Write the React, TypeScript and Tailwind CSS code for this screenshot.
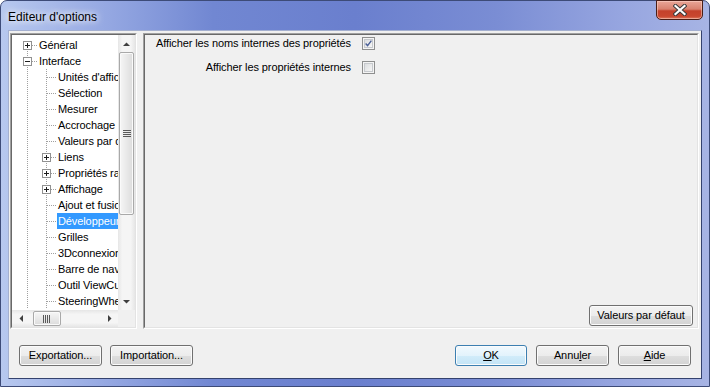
import React from "react";

type Row = { label: string; level: 0 | 1; exp?: "+" | "-"; sel?: boolean };

const rows: Row[] = [
  { label: "Général", level: 0, exp: "+" },
  { label: "Interface", level: 0, exp: "-" },
  { label: "Unités d'affichage", level: 1 },
  { label: "Sélection", level: 1 },
  { label: "Mesurer", level: 1 },
  { label: "Accrochage", level: 1 },
  { label: "Valeurs par défaut", level: 1 },
  { label: "Liens", level: 1, exp: "+" },
  { label: "Propriétés rapides", level: 1, exp: "+" },
  { label: "Affichage", level: 1, exp: "+" },
  { label: "Ajout et fusion", level: 1 },
  { label: "Développeur", level: 1, sel: true },
  { label: "Grilles", level: 1 },
  { label: "3Dconnexion", level: 1 },
  { label: "Barre de navigation", level: 1 },
  { label: "Outil ViewCube", level: 1 },
  { label: "SteeringWheels", level: 1 },
];

// one indent column of the tree: dotted lines + optional expander box
function TreeCell({
  up = true,
  horiz = false,
  box,
}: {
  up?: boolean;
  horiz?: boolean;
  box?: "+" | "-";
}) {
  const dot = { stroke: "#a0a0a0", strokeDasharray: "1 1" };
  return (
    <svg width="19" height="16" className="shrink-0" shapeRendering="crispEdges">
      <line x1="9.5" y1={up ? 0 : 8} x2="9.5" y2="16" {...dot} />
      {horiz && <line x1="10" y1="8.5" x2="19" y2="8.5" {...dot} />}
      {box && (
        <>
          <rect x="5.5" y="4.5" width="8" height="8" fill="#fff" stroke="#919191" />
          <line x1="7" y1="8.5" x2="12" y2="8.5" stroke="#1e1e1e" />
          {box === "+" && <line x1="9.5" y1="6" x2="9.5" y2="11" stroke="#1e1e1e" />}
        </>
      )}
    </svg>
  );
}

function Arrow({ dir }: { dir: "up" | "down" | "left" | "right" }) {
  const pts = {
    up: "0,4 7,4 3.5,0.5",
    down: "0,0 7,0 3.5,3.5",
    left: "4,0 4,7 0.5,3.5",
    right: "0,0 0,7 3.5,3.5",
  }[dir];
  const v = dir === "up" || dir === "down";
  return (
    <svg width={v ? 7 : 4} height={v ? 4 : 7}>
      <polygon points={pts} fill="#404040" />
    </svg>
  );
}

function Grip({ vertical }: { vertical: boolean }) {
  return (
    <svg width="8" height="8" shapeRendering="crispEdges">
      {[0, 2, 4, 6].map((o) =>
        vertical ? (
          <line key={o} x1="0" y1={o + 0.5} x2="8" y2={o + 0.5} stroke="#5a5a5a" />
        ) : (
          <line key={o} x1={o + 0.5} y1="0" x2={o + 0.5} y2="8" stroke="#5a5a5a" />
        )
      )}
    </svg>
  );
}

function Button({
  label,
  w,
  focus,
}: {
  label: React.ReactNode;
  w: string;
  focus?: boolean;
}) {
  return (
    <div
      className={`${w} h-[21px] flex items-center justify-center rounded-[3px] border text-black shadow-[inset_0_0_0_1px_#fbfbfb] ${
        focus
          ? "border-[#3c7fb1] bg-[linear-gradient(#f1f9fe_0%,#e3f3fc_50%,#d2ecfa_51%,#c3e4f6_100%)]"
          : "border-[#707070] bg-[linear-gradient(#f3f3f3_0%,#ececec_50%,#dedede_51%,#d3d3d3_100%)]"
      }`}
    >
      {label}
    </div>
  );
}

function Checkbox({ checked }: { checked?: boolean }) {
  return (
    <div className="w-[13px] h-[13px] shrink-0 border border-[#8e8f8f] bg-[#f4f4f4] p-[1px]">
      <div className="w-full h-full border border-[#c6c9cd] bg-[linear-gradient(135deg,#dcdee0,#f6f6f6)] flex items-center justify-center">
        {checked && (
          <svg width="9" height="9" viewBox="0 0 9 9">
            <path d="M0.8 4.6 L3.3 7.2 L8.2 0.8" fill="none" stroke="#4a5f97" strokeWidth="1.8" />
          </svg>
        )}
      </div>
    </div>
  );
}

export default function App() {
  return (
    <div className="w-[710px] h-[387px] [font-family:'Liberation_Sans',Arial,sans-serif] text-[11px] tracking-[-0.1px] text-black">
      <div className="w-full h-full flex flex-col rounded-t-[7px] border border-[#3d4b78] bg-[linear-gradient(to_right,#b7c8ef_0%,#95a8e2_15%,#7187d2_30%,#6a7fce_50%,#7a8dd4_70%,#97a6e0_88%,#a7b4e4_100%)]">
        {/* Title bar */}
        <div className="h-[29px] flex items-start shrink-0">
          <div className="pl-[7px] pt-[7px] text-[12px] tracking-normal [text-shadow:0_0_6px_#fff,0_0_10px_#fff]">
            Editeur d'options
          </div>
          <div className="ml-auto mr-[6px] w-[47px] h-[20px] -mt-[1px] rounded-b-[5px] border border-[#4a1e16] bg-[linear-gradient(#e9a698_0%,#d8826f_45%,#c4412b_55%,#c9472f_85%,#dd7a5e_100%)] shadow-[inset_0_0_0_1px_rgba(255,220,210,0.5)] flex items-center justify-center">
            <svg width="14" height="12" viewBox="0 0 14 12">
              <path d="M2.5 2 L11.5 10 M11.5 2 L2.5 10" stroke="#3b3b3b" strokeWidth="4.2" strokeLinecap="square" />
              <path d="M2.5 2 L11.5 10 M11.5 2 L2.5 10" stroke="#fff" strokeWidth="2.2" strokeLinecap="square" />
            </svg>
          </div>
        </div>

        {/* Client area */}
        <div className="flex-1 mx-[7px] mb-[7px] flex flex-col bg-[#f0f0f0] border border-t-[#a4b0d0] border-l-[#a4b0d0] border-r-[#34426e] border-b-[#34426e] pl-[1px] pr-[2px] pt-[2px] pb-[12px]">
          <div className="flex h-[296px] gap-[6px]">
            {/* Tree panel */}
            <div className="w-[127px] h-full border border-t-[#a0a0a0] border-l-[#a0a0a0] border-r-white border-b-white">
              <div className="w-full h-full border border-t-[#696969] border-l-[#696969] border-r-[#e3e3e3] border-b-[#e3e3e3] flex flex-col bg-white">
                <div className="flex flex-1 min-h-0">
                  <div className="flex-1 min-w-0 overflow-hidden pt-[2px]">
                    {rows.map((r, i) => (
                      <div key={r.label} className="flex h-[16px] items-center pl-[6px] whitespace-nowrap">
                        {r.level === 0 ? (
                          <TreeCell up={i > 0} horiz box={r.exp} />
                        ) : (
                          <>
                            <TreeCell />
                            <TreeCell horiz box={r.exp} />
                          </>
                        )}
                        <span
                          className={`ml-[1px] px-[1px] h-[16px] leading-[16px] ${
                            r.sel ? "bg-[#3399ff] text-white" : ""
                          }`}
                        >
                          {r.label}
                        </span>
                      </div>
                    ))}
                  </div>
                  {/* vertical scrollbar */}
                  <div className="w-[17px] flex flex-col bg-[linear-gradient(to_right,#e6e6e6,#f5f5f5_25%,#f5f5f5_75%,#e6e6e6)]">
                    <div className="h-[17px] flex items-center justify-center">
                      <Arrow dir="up" />
                    </div>
                    <div className="h-[163px] mx-[1px] rounded-[2px] border border-[#a9a9a9] bg-[linear-gradient(to_right,#f6f6f6,#e9e9e9_50%,#dcdcdc)] shadow-[inset_0_0_0_1px_#fafafa] flex items-center justify-center">
                      <Grip vertical />
                    </div>
                    <div className="flex-1" />
                    <div className="h-[17px] flex items-center justify-center">
                      <Arrow dir="down" />
                    </div>
                  </div>
                </div>
                {/* horizontal scrollbar */}
                <div className="h-[17px] flex shrink-0">
                  <div className="flex-1 flex items-center bg-[linear-gradient(#e6e6e6,#f5f5f5_25%,#f5f5f5_75%,#e6e6e6)]">
                    <div className="w-[17px] h-full flex items-center justify-center">
                      <Arrow dir="left" />
                    </div>
                    <div className="ml-[4px] w-[28px] h-[15px] rounded-[2px] border border-[#a9a9a9] bg-[linear-gradient(#f6f6f6,#e9e9e9_50%,#dcdcdc)] shadow-[inset_0_0_0_1px_#fafafa] flex items-center justify-center">
                      <Grip vertical={false} />
                    </div>
                    <div className="flex-1" />
                    <div className="w-[17px] h-full flex items-center justify-center">
                      <Arrow dir="right" />
                    </div>
                  </div>
                  <div className="w-[17px] h-full bg-[#f0f0f0]" />
                </div>
              </div>
            </div>

            {/* Right panel */}
            <div className="flex-1 h-full border border-t-[#a0a0a0] border-l-[#a0a0a0] border-r-white border-b-white">
              <div className="w-full h-full border border-t-[#696969] border-l-[#696969] border-r-[#e3e3e3] border-b-[#e3e3e3] flex flex-col pt-[2px] pb-[1px] pr-[4px]">
                <div className="flex flex-col gap-[11px]">
                  <div className="flex items-center h-[13px]">
                    <div className="w-[206px] text-right whitespace-nowrap">
                      Afficher les noms internes des propriétés
                    </div>
                    <div className="ml-[11px]">
                      <Checkbox checked />
                    </div>
                  </div>
                  <div className="flex items-center h-[13px]">
                    <div className="w-[206px] text-right whitespace-nowrap">
                      Afficher les propriétés internes
                    </div>
                    <div className="ml-[11px]">
                      <Checkbox />
                    </div>
                  </div>
                </div>
                <div className="mt-auto self-end">
                  <Button label="Valeurs par défaut" w="w-[104px]" />
                </div>
              </div>
            </div>
          </div>

          {/* Bottom buttons */}
          <div className="mt-[16px] flex items-center pl-[9px] pr-[8px]">
            <div className="flex gap-[8px]">
              <Button label="Exportation..." w="w-[83px]" />
              <Button label="Importation..." w="w-[83px]" />
            </div>
            <div className="ml-auto flex gap-[9px]">
              <Button
                focus
                w="w-[72px]"
                label={
                  <span>
                    <span className="underline">O</span>K
                  </span>
                }
              />
              <Button
                w="w-[73px]"
                label={
                  <span>
                    Annu<span className="underline">l</span>er
                  </span>
                }
              />
              <Button
                w="w-[73px]"
                label={
                  <span>
                    <span className="underline">A</span>ide
                  </span>
                }
              />
            </div>
          </div>
        </div>
      </div>
    </div>
  );
}
